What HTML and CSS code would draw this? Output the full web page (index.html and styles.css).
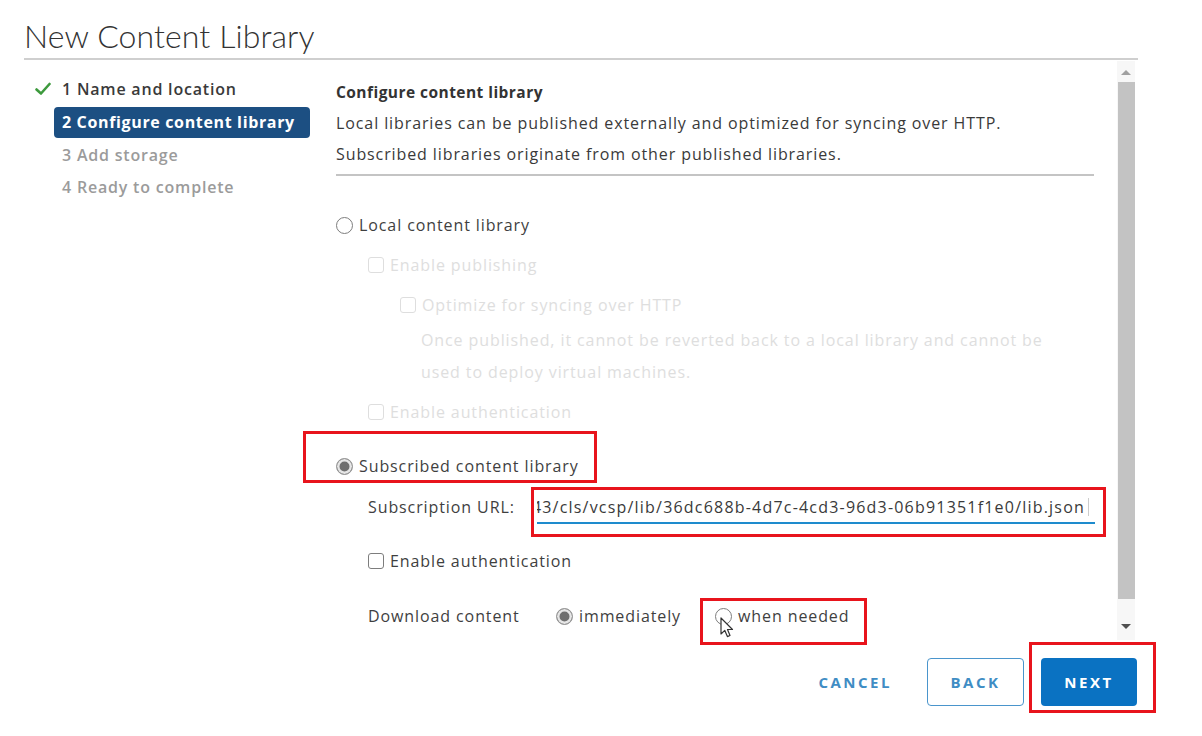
FILE: index.html
```html
<!DOCTYPE html>
<html lang="en">
<head>
<meta charset="utf-8">
<title>New Content Library</title>
<link rel="stylesheet" href="styles.css">
</head>
<body>
<div class="dialog">
  <div class="title">New Content Library</div>
  <div class="main">
    <nav class="steps">
      <div class="step done">
        <svg class="check" viewBox="0 0 16 16" width="16" height="16"><path d="M1.5 8.5 L6 12.5 L14.5 3" fill="none" stroke="#3d9a3d" stroke-width="2.6" stroke-linecap="round" stroke-linejoin="round"/></svg>
        <span>1 Name and location</span>
      </div>
      <div class="step active"><span>2 Configure content library</span></div>
      <div class="step todo"><span>3 Add storage</span></div>
      <div class="step todo"><span>4 Ready to complete</span></div>
    </nav>
    <div class="pane">
      <div class="content">
        <div class="intro">
          <div class="heading">Configure content library</div>
          <div class="line">Local libraries can be published externally and optimized for syncing over HTTP.</div>
          <div class="line">Subscribed libraries originate from other published libraries.</div>
        </div>
        <div class="row r-local"><span class="radio"></span><span>Local content library</span></div>
        <div class="row r-pub indent1 disabled"><span class="box"></span><span>Enable publishing</span></div>
        <div class="row r-opt indent2 disabled"><span class="box"></span><span>Optimize for syncing over HTTP</span></div>
        <div class="row r-once indent3 disabled"><span>Once published, it cannot be reverted back to a local library and cannot be</span></div>
        <div class="row r-used indent3 disabled"><span>used to deploy virtual machines.</span></div>
        <div class="row r-auth0 indent1 disabled"><span class="box"></span><span>Enable authentication</span></div>
        <div class="row r-sub annotated"><span class="radio on"></span><span>Subscribed content library</span><span class="mark m-sub"></span></div>
        <div class="row r-url indent1 annotated">
          <span class="label">Subscription URL:</span>
          <div class="url"><span class="url-text">43/cls/vcsp/lib/36dc688b-4d7c-4cd3-96d3-06b91351f1e0/lib.json</span><span class="caret"></span></div>
          <span class="mark m-url"></span>
        </div>
        <div class="row r-auth indent1"><span class="box"></span><span>Enable authentication</span></div>
        <div class="row r-dl indent1 annotated">
          <span class="label dl-label">Download content</span>
          <span class="opt"><span class="radio on"></span><span>immediately</span></span>
          <span class="opt opt2"><span class="radio"></span><span>when needed</span></span>
          <span class="mark m-dl"></span>
          <svg class="cursor" viewBox="0 0 14 22" width="14" height="22"><path d="M1 1 L1 17 L4.8 13.4 L7.4 19.6 L10 18.5 L7.5 12.5 L12.5 12.5 Z" fill="#fff" stroke="#333" stroke-width="1.2" stroke-linejoin="round"/></svg>
        </div>
      </div>
      <div class="scrollbar">
        <div class="arrow up"></div>
        <div class="thumb"></div>
        <div class="arrow down"></div>
      </div>
    </div>
  </div>
  <div class="footer">
    <button class="btn flat">CANCEL</button>
    <button class="btn outline">BACK</button>
    <button class="btn primary annotated">NEXT<span class="mark m-next"></span></button>
  </div>
</div>
</body>
</html>
```
FILE: styles.css
```css
* { box-sizing: border-box; }
html, body { margin: 0; padding: 0; background: #fff; }
body {
  font-family: "Open Sans", "Lato", "Liberation Sans", sans-serif;
  color: #3a3a3a;
  width: 1202px;
  height: 736px;
  overflow: hidden;
}
.dialog { padding-left: 24px; width: 1138px; }

.title {
  height: 60px;
  padding-top: 16px;
  font-family: "Lato", "Open Sans", sans-serif;
  font-weight: 300;
  font-size: 32px;
  line-height: 40px;
  letter-spacing: 0.1px;
  color: #333;
  border-bottom: 2px solid #cfcfcf;
}

.main { display: flex; height: 580px; }

.steps { width: 312px; padding-top: 13px; }
.step {
  display: flex;
  align-items: center;
  height: 32.5px;
  margin-left: 30px;
  width: 256px;
  padding-left: 8px;
  font-size: 16px;
  font-weight: 600;
  letter-spacing: 0.8px;
  border-radius: 4px;
  white-space: nowrap;
}
.step .check { margin-left: -27px; margin-right: 11px; flex: none; }
.step.done { color: #3a3a3a; }
.step.active { background: #1c4f82; color: #fff; font-weight: 700; letter-spacing: 0.65px; height: 31px; margin: 1px 0 1px 30px; }
.step.todo { color: #9b9b9b; }

.pane { display: flex; width: 802px; padding-top: 1px; }
.content { width: 781px; height: 579px; font-size: 16px; letter-spacing: 0.9px; }
.intro { width: 758px; padding-top: 16px; border-bottom: 2px solid #c4c4c4; padding-bottom: 4px; }
.heading { font-weight: 700; line-height: 31px; color: #333; letter-spacing: 0.45px; font-size: 15.5px; }
.line { line-height: 31px; color: #3a3a3a; }

.row { display: flex; align-items: center; height: 32px; white-space: nowrap; color: #3f3f3f; }
.annotated { position: relative; }
.indent1 { padding-left: 32px; }
.indent2 { padding-left: 64px; }
.indent3 { padding-left: 85px; }
.disabled { color: #dedede; }

.r-local { margin-top: 33px; }
.r-pub { margin-top: 8px; }
.r-opt { margin-top: 8px; }
.r-once { margin-top: 3px; }
.r-used { margin-top: 0; }
.r-auth0 { margin-top: 8px; }
.r-sub { margin-top: 22px; }
.r-url { margin-top: 9px; }
.r-auth { margin-top: 22px; }
.r-dl { margin-top: 23px; }

.radio {
  width: 17px; height: 17px; border-radius: 50%;
  border: 1.5px solid #7d7d7d;
  margin-right: 6px; flex: none;
  background: #fff;
}
.radio.on { border: 1.5px solid #9a9a9a; box-shadow: inset 0 0 0 2.5px #e6e6e6; background: #6f6f6f; }
.box {
  width: 16px; height: 16px; border-radius: 3px;
  border: 1.5px solid #7d7d7d;
  margin-right: 6px; flex: none;
}
.disabled .box { border-color: #dedede; }

.label { width: 169px; flex: none; color: #3f3f3f; }
.url {
  width: 558px; height: 32px;
  display: flex; justify-content: flex-end; align-items: center;
  overflow: hidden;
  border-bottom: 2px solid #1e8bcd;
  padding-right: 6px;
  color: #3a3a3a;
  margin-top: 2px;
}
.url-text { flex: none; letter-spacing: 1.2px; }
.caret { flex: none; width: 1px; height: 18px; background: #ccc; margin-left: 3px; }

.dl-label { width: 188px; }
.opt { display: flex; align-items: center; }
.opt2 { margin-left: 34px; }

.mark { position: absolute; border: 3px solid #e8141c; pointer-events: none; }
.m-sub { left: -33px; top: -19px; width: 294px; height: 52px; }
.m-url { left: 195px; top: -4px; width: 575px; height: 50px; }
.m-dl { left: 364px; top: -2px; width: 167px; height: 47px; }
.m-next { left: -12px; top: -16px; width: 127px; height: 71px; }
.cursor { position: absolute; left: 384px; top: 17px; }

.scrollbar {
  width: 18px; height: 579px;
  display: flex; flex-direction: column; align-items: center;
  background: #f7f7f7;
}
.arrow { width: 0; height: 0; border-left: 5px solid transparent; border-right: 5px solid transparent; }
.arrow.up { border-bottom: 5px solid #a0a0a0; margin-top: 9px; margin-bottom: 7px; }
.thumb { width: 17px; height: 517px; background: #c3c3c3; }
.arrow.down { border-top: 5px solid #505050; margin-top: 25px; }

.footer {
  display: flex; justify-content: flex-end; align-items: center;
  padding-top: 18px; padding-right: 1px;
}
.btn {
  font-family: "Open Sans", "Lato", sans-serif;
  font-size: 15px; font-weight: 700; letter-spacing: 2.5px;
  height: 48px; border-radius: 4px; cursor: pointer;
}
.btn.flat { background: none; border: none; color: #3f8dc4; padding: 0 22px; margin-right: 13px; }
.btn.outline { background: #fff; border: 1.5px solid #4a95cc; color: #3f8dc4; width: 97px; margin-right: 17px; }
.btn.primary { position: relative; background: #0a72c2; border: none; color: #fff; width: 96px; }
```
